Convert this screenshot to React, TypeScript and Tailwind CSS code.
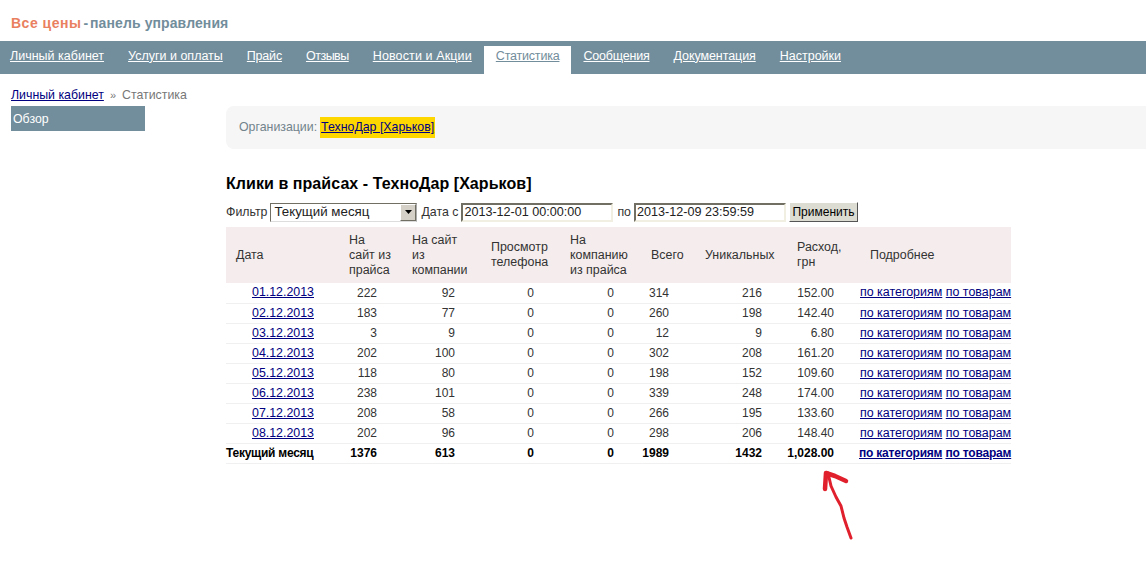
const navItems = [
  { label: "Личный кабинет", track: "" },
  { label: "Услуги и оплаты", track: "" },
  { label: "Прайс", track: "tracking-[-0.2px]" },
  { label: "Отзывы", track: "tracking-[-0.5px]" },
  { label: "Новости и Акции", track: "tracking-[0.12px]" },
  { label: "Статистика", track: "tracking-[-0.2px]" },
  { label: "Сообщения", track: "tracking-[-0.2px]" },
  { label: "Документация", track: "tracking-[-0.08px]" },
  { label: "Настройки", track: "" },
];

const rows = [
  ["01.12.2013", 222, 92, 0, 0, 314, 216, "152.00"],
  ["02.12.2013", 183, 77, 0, 0, 260, 198, "142.40"],
  ["03.12.2013", 3, 9, 0, 0, 12, 9, "6.80"],
  ["04.12.2013", 202, 100, 0, 0, 302, 208, "161.20"],
  ["05.12.2013", 118, 80, 0, 0, 198, 152, "109.60"],
  ["06.12.2013", 238, 101, 0, 0, 339, 248, "174.00"],
  ["07.12.2013", 208, 58, 0, 0, 266, 195, "133.60"],
  ["08.12.2013", 202, 96, 0, 0, 298, 206, "148.40"],
];

const totals = ["Текущий месяц", 1376, 613, 0, 0, 1989, 1432, "1,028.00"];

// padding-right of each number column, so values end where they do in the price table
const numCell = [
  "pr-[25px]",
  "pr-[26px]",
  "pr-[26px]",
  "pr-[27px]",
  "pr-[26px]",
  "pr-[25px]",
  "pr-[26px]",
];

function Links({ bold }: { bold?: boolean }) {
  return (
    <td className={bold ? "whitespace-nowrap text-left tracking-[-0.2px]" : "whitespace-nowrap text-left text-[12.45px]"}>
      <span className={bold ? "-ml-px inline-block" : ""}>
        <a href="#" className="text-[#000080] underline">
          по категориям
        </a>{" "}
        <a href="#" className="text-[#000080] underline">
          по товарам
        </a>
      </span>
    </td>
  );
}

function DateField({ value }: { value: string }) {
  return (
    <input
      readOnly
      value={value}
      className="h-[19px] w-[152px] border-2 border-t-[#716f64] border-l-[#716f64] border-r-[#f1efe2] border-b-[#f1efe2] bg-white px-px text-[12.6px] text-[#222] outline-none"
    />
  );
}

export default function App() {
  return (
    <div className="relative h-[585px] w-[1146px] overflow-hidden bg-white font-['Liberation_Sans',Arial,sans-serif] text-[12px] text-[#444]">
      <div className="flex h-[41px] items-start pl-[11px] pt-[15px] text-[14px] font-bold leading-[17px]">
        <span className="tracking-[0.5px] text-[#e9805f]">Все цены</span>
        <span className="px-[2px] text-[#728d9b]">-</span>
        <span className="tracking-[0.1px] text-[#728d9b]">панель управления</span>
      </div>

      <nav className="flex h-[33px] items-end gap-[24px] bg-[#728d9b] pl-[10px] text-[12.5px]">
        {navItems.map((item) =>
          item.label === "Статистика" ? (
            <a
              key={item.label}
              href="#"
              className={`-mx-3 flex h-[28px] items-center bg-white px-3 pb-[8px] text-[#728d9b] underline ${item.track}`}
            >
              {item.label}
            </a>
          ) : (
            <a key={item.label} href="#" className={`flex h-[28px] items-center pb-[8px] text-white underline ${item.track}`}>
              {item.label}
            </a>
          ),
        )}
      </nav>

      <div className="flex h-[32px] items-center gap-[6px] pl-[11px] pt-[10px] text-[12.35px] text-[#777]">
        <a href="#" className="text-[#000080] underline">
          Личный кабинет
        </a>
        <span className="text-[11px]">»</span>
        <span>Статистика</span>
      </div>

      <div className="flex">
        <aside className="ml-[11px] w-[134px] shrink-0">
          <div className="flex h-[25px] items-center bg-[#728d9b] pl-[2px] pt-[1px] text-[12.35px] text-white">Обзор</div>
        </aside>

        <main className="ml-[81px] min-w-0 flex-1">
          <div className="flex h-[43px] items-center rounded-l-[8px] bg-[#f6f6f6] pl-[13px] text-[12.35px] text-[#72838c]">
            <span>Организации:</span>
            <a href="#" className="ml-[3px] bg-[#ffd700] px-[1px] py-[1px] text-[#000080] underline">
              ТехноДар [Харьков]
            </a>
          </div>

          <h1 className="mt-[26px] text-[16px] font-bold leading-[18px] tracking-[0.06px] text-black">
            Клики в прайсах - ТехноДар [Харьков]
          </h1>

          <div className="mt-[9px] flex h-[20px] items-center text-[12.35px] text-[#333]">
            <span>Фильтр</span>
            <div className="ml-[3px] flex h-[19px] w-[147px] items-center justify-between border border-t-[#716f64] border-l-[#716f64] border-r-[#aaa] border-b-[#ddd] pl-[3px] text-[13.3px] text-[#222]">
              <span>Текущий месяц</span>
              <span className="flex h-[17px] w-[16px] items-center justify-center border border-t-white border-l-white border-r-[#716f64] border-b-[#716f64] bg-[#d4d0c8]">
                <svg width="7" height="4" viewBox="0 0 7 4">
                  <path d="M0 0h7L3.5 4z" fill="#000" />
                </svg>
              </span>
            </div>
            <span className="ml-[4px] mr-[3px]">Дата с</span>
            <DateField value="2013-12-01 00:00:00" />
            <span className="ml-[4px] mr-[3px]">по</span>
            <DateField value="2013-12-09 23:59:59" />
            <button className="ml-[3px] h-[20px] w-[69px] border border-t-white border-l-white border-r-[#555] border-b-[#555] bg-[#dcdcd2] text-[12px] text-black">
              Применить
            </button>
          </div>

          <table className="mt-[5px] w-[785px] table-fixed border-collapse text-right text-[12px] text-[#333]">
            <colgroup>
              <col className="w-[113px]" />
              <col className="w-[63px]" />
              <col className="w-[79px]" />
              <col className="w-[79px]" />
              <col className="w-[81px]" />
              <col className="w-[54px]" />
              <col className="w-[92px]" />
              <col className="w-[73px]" />
              <col className="w-[151px]" />
            </colgroup>
            <thead>
              <tr className="h-[56px] bg-[#f5eded] text-left text-[12.45px] leading-[15px]">
                <th className="pl-[10px] font-normal">Дата</th>
                <th className="pl-[10px] font-normal">
                  На
                  <br />
                  сайт из
                  <br />
                  прайса
                </th>
                <th className="pl-[10px] font-normal">
                  На сайт
                  <br />
                  из
                  <br />
                  компании
                </th>
                <th className="pl-[10px] font-normal">
                  Просмотр
                  <br />
                  телефона
                </th>
                <th className="pl-[10px] font-normal">
                  На
                  <br />
                  компанию
                  <br />
                  из прайса
                </th>
                <th className="pl-[10px] font-normal">Всего</th>
                <th className="pl-[10px] font-normal">Уникальных</th>
                <th className="pl-[10px] font-normal">
                  Расход,
                  <br />
                  грн
                </th>
                <th className="pl-[10px] font-normal">Подробнее</th>
              </tr>
            </thead>
            <tbody>
              {rows.map((row) => (
                <tr key={row[0]} className="h-[20px] border-b border-[#f0f0f0]">
                  <td className="pr-[25px] text-[12.4px]">
                    <a href="#" className="text-[#000080] underline">
                      {row[0]}
                    </a>
                  </td>
                  {row.slice(1).map((value, i) => (
                    <td key={i} className={numCell[i]}>
                      {value}
                    </td>
                  ))}
                  <Links />
                </tr>
              ))}
              <tr className="h-[20px] border-b border-[#f0f0f0] font-bold text-black">
                <td className="text-left tracking-[-0.25px] whitespace-nowrap">{totals[0]}</td>
                {totals.slice(1).map((value, i) => (
                  <td key={i} className={numCell[i]}>
                    {value}
                  </td>
                ))}
                <Links bold />
              </tr>
            </tbody>
          </table>
        </main>
      </div>

      {/* red hand-drawn arrow on top of the screenshot */}
      <svg className="absolute left-[815px] top-[465px]" width="45" height="80" viewBox="815 465 45 80" fill="none">
        <path
          d="M825 489 L826 473 L835 476 L846 481"
          stroke="#e0202c"
          strokeWidth="4.5"
          strokeLinecap="round"
          strokeLinejoin="round"
        />
        <path
          d="M828 473 L831 486 L836 497 L841 506 L844 518 L847 527 L851 538"
          stroke="#e0202c"
          strokeWidth="3"
          strokeLinecap="round"
          strokeLinejoin="round"
        />
      </svg>
    </div>
  );
}
